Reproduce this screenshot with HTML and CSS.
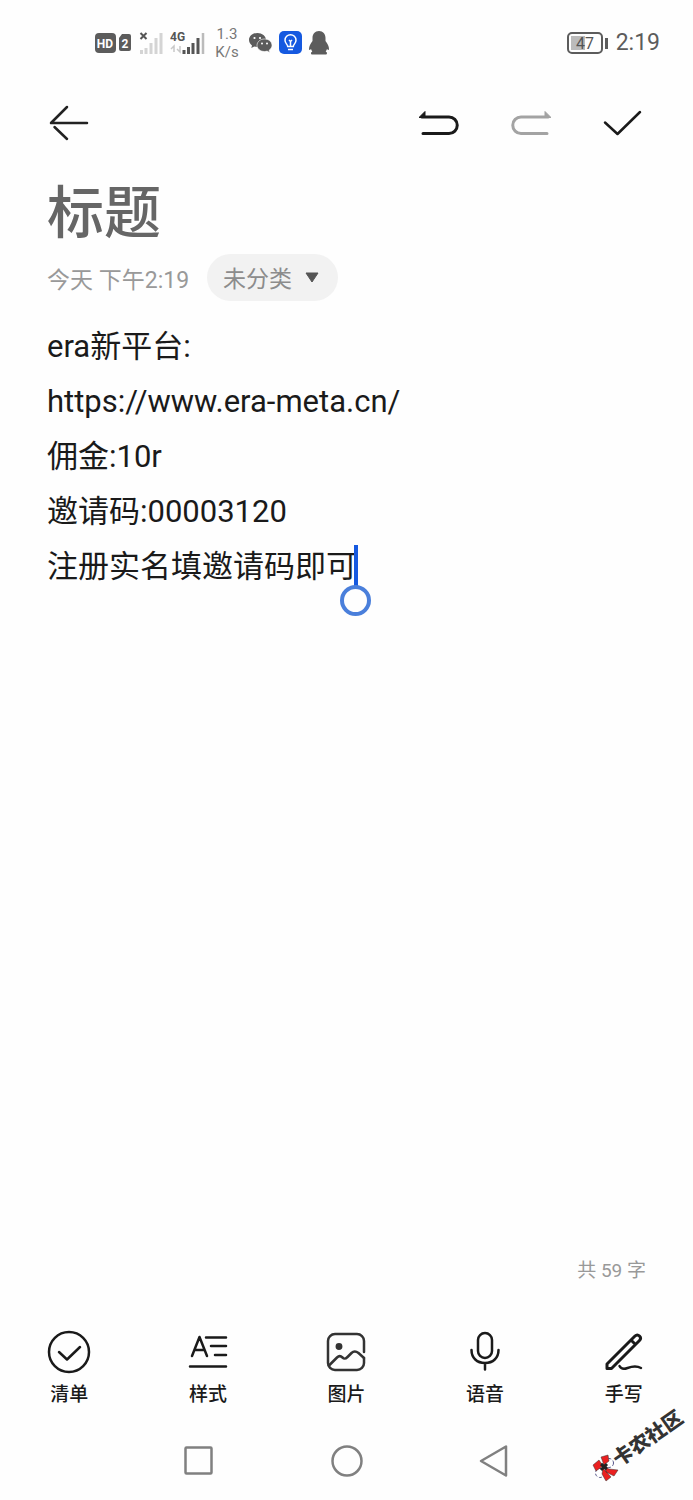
FILE: index.html
```
<!DOCTYPE html>
<html lang="zh-CN">

<head>
    <meta charset="UTF-8">
    <meta name="viewport" content="width=device-width, initial-scale=1.0">
    <title>备忘录</title>
    <link rel="stylesheet" href="styles.css">
</head>

<body>
    <div class="status-bar">
        <div class="status-left">
            <svg class="sim" width="37" height="20" viewBox="0 0 37 20">
                <rect x="0" y="0" width="21" height="20" rx="4" fill="#5c5c5c" />
                <text x="10" y="15" class="hd-text">HD</text>
                <path d="M27 1h7a2 2 0 0 1 2 2v13a2 2 0 0 1-2 2h-8a2 2 0 0 1-2-2V5z" fill="#5c5c5c" />
                <text x="30" y="15" class="hd-text">2</text>
            </svg>
            <svg class="signal" width="24" height="24" viewBox="0 0 24 24">
                <path d="M1.500 2l6 6M7.500 2l-6 6" stroke="#555" stroke-width="2" />
                <path d="M2.500 19v4M7 17v6M12 12v11M17 7v16M22 2v21" stroke="#d4d4d4" stroke-width="3" />
            </svg>
            <svg class="signal-4g" width="35" height="24" viewBox="0 0 35 24">
                <text x="0" y="10" class="net-text">4G</text>
                <path d="M1 18l3-3v6M10 15v6l-3-3" stroke="#c8c8c8" stroke-width="1.500" fill="none" />
                <path d="M14 19v4M18.500 16v7M23 12v11M28 7v16" stroke="#555" stroke-width="3" />
                <path d="M33 2v21" stroke="#bbb" stroke-width="2.500" />
            </svg>
            <span class="speed">1.3<br>K/s</span>
            <svg class="wechat" width="23" height="20" viewBox="0 0 23 20">
                <path d="M8.500 0C3.800 0 0 3.100 0 7c0 2.200 1.200 4.100 3 5.400L2.300 15l3-1.600c1 .3 2 .5 3.200.5C13 14 17 10.900 17 7S13 0 8.500 0z" fill="#5c5c5c" />
                <path d="M15.500 6C11.300 6 8 8.800 8 12.300s3.300 6.200 7.500 6.200c.9 0 1.800-.1 2.600-.4l2.700 1.500-.7-2.400c1.700-1.200 2.900-2.900 2.900-4.900C23 8.800 19.700 6 15.500 6z" fill="#5c5c5c" stroke="#fff" stroke-width=".6" />
                <g fill="#fff">
                    <circle cx="5.500" cy="5" r="1.100" />
                    <circle cx="11" cy="5" r="1.100" />
                    <circle cx="13" cy="10.500" r="1" />
                    <circle cx="18" cy="10.500" r="1" />
                </g>
            </svg>
            <svg class="bulb" width="23" height="23" viewBox="0 0 23 23">
                <rect width="23" height="23" rx="5" fill="#1559e0" />
                <path d="M8.700 15.500c0-2-2.700-3-2.700-6.300a5.500 5.500 0 0 1 11 0c0 3.300-2.700 4.300-2.700 6.300zM9 18.500h5M11.500 15v-5M10 9l1.500 1.500L13 9" fill="none" stroke="#fff" stroke-width="1.500" />
            </svg>
            <svg class="qq" width="20" height="24" viewBox="0 0 20 24">
                <path d="M10 0C6 0 3.500 3 3.500 7v3C1.500 12.500 0 15.500 0 18c0 1.500.9 1.200 2 0 .3 1 .7 1.800 1.300 2.500-1.800.9-1.800 3 .2 3h13c2 0 2-2.100.2-3 .6-.7 1-1.500 1.300-2.500 1.100 1.200 2 1.500 2 0 0-2.500-1.500-5.500-3.500-8V7c0-4-2.500-7-6.500-7z" fill="#5c5c5c" />
            </svg>
        </div>
        <div class="status-right">
            <svg width="42" height="22" viewBox="0 0 42 22">
                <rect x="4" y="4" width="14" height="14" fill="#bbb" />
                <rect x="1" y="1" width="34" height="20" rx="4" fill="none" stroke="#5c5c5c" stroke-width="2" />
                <path d="M39.500 6v11" stroke="#5c5c5c" stroke-width="3" />
                <text x="18" y="17" class="battery-text">47</text>
            </svg>
            <span class="clock">2:19</span>
        </div>
    </div>

    <header class="top-bar">
        <button class="icon-btn back" aria-label="返回">
            <svg width="40" height="36" viewBox="0 0 40 36" fill="none" stroke="#222" stroke-width="2.500" stroke-linecap="round">
                <path d="M18 2L2 18H38M5.500 22L18 34" stroke-linejoin="round" />
            </svg>
        </button>
        <button class="icon-btn" aria-label="撤销">
            <svg width="40" height="26" viewBox="0 0 40 26">
                <path d="M3 7H30a8.200 8.200 0 0 1 0 16.500H4" fill="none" stroke="#1a1a1a" stroke-width="3" stroke-linecap="round" />
                <path d="M0 7.500L6 1.500V7.500z" fill="#1a1a1a" stroke="#1a1a1a" stroke-linejoin="round" />
            </svg>
        </button>
        <button class="icon-btn" aria-label="重做" disabled>
            <svg width="40" height="26" viewBox="0 0 40 26">
                <path d="M37 7H10a8.200 8.200 0 0 0 0 16.500H36" fill="none" stroke="#a3a3a3" stroke-width="3" stroke-linecap="round" />
                <path d="M40 7.500L34 1.500V7.500z" fill="#a3a3a3" stroke="#a3a3a3" stroke-linejoin="round" />
            </svg>
        </button>
        <button class="icon-btn" aria-label="完成">
            <svg width="40" height="26" viewBox="0 0 40 26">
                <path d="M2 12.500L14.500 24L37 2" fill="none" stroke="#1a1a1a" stroke-width="2.500" stroke-linecap="round" stroke-linejoin="round" />
            </svg>
        </button>
    </header>

    <main class="note">
        <input class="title" type="text" placeholder="标题" aria-label="标题">
        <div class="meta">
            <span class="time">今天 下午2:19</span>
            <div class="category">
                <select aria-label="分类">
                    <option>未分类</option>
                </select>
                <svg class="arrow" width="14" height="11" viewBox="0 0 14 11">
                    <path d="M1 1h12L7 10z" fill="#555" stroke="#555" stroke-linejoin="round" />
                </svg>
            </div>
        </div>
        <div class="editor">
            <textarea class="content" rows="5" aria-label="正文" spellcheck="false">era新平台:
https://www.era-meta.cn/
佣金:10r
邀请码:00003120
注册实名填邀请码即可</textarea>
            <div class="caret"></div>
        </div>
        <p class="count">共 59 字</p>
    </main>

    <footer class="tools">
        <button class="tool">
            <svg width="44" height="44" viewBox="0 0 44 44" fill="none" stroke="#1a1a1a" stroke-width="2.500" stroke-linecap="round" stroke-linejoin="round">
                <circle cx="22" cy="22" r="20" />
                <path d="M12 22l8 7.500L33 17" />
            </svg>
            清单
        </button>
        <button class="tool">
            <svg width="44" height="44" viewBox="0 0 44 44" fill="none" stroke="#1a1a1a" stroke-width="2.500" stroke-linecap="round" stroke-linejoin="round">
                <path d="M6 26L13.500 7L21 26M8.500 20H18.500M20 7.500H40M25 16H40M29 25H40M4 36.500H40" />
            </svg>
            样式
        </button>
        <button class="tool">
            <svg width="44" height="44" viewBox="0 0 44 44" fill="none" stroke="#333" stroke-width="2.500" stroke-linecap="round" stroke-linejoin="round">
                <path d="M40 22V11a7 7 0 0 0-7-7H11a7 7 0 0 0-7 7V33a7 7 0 0 0 7 7H33a7 7 0 0 0 7-7V28" />
                <path d="M5 35.500l8-8c2-2 3.500-2 5.500 0s3 1.500 5-.5l4-4c2.500-2.500 4.500-2 7 0l5.500 5" />
                <circle cx="15" cy="16.500" r="2.200" fill="#333" />
            </svg>
            图片
        </button>
        <button class="tool">
            <svg width="44" height="44" viewBox="0 0 44 44" fill="none" stroke="#1a1a1a" stroke-width="2.500" stroke-linecap="round">
                <rect x="15" y="3" width="14" height="25" rx="7" />
                <path d="M8.500 20c0 8 5.500 13 13.500 13s13.500-5 13.500-13M22 33v6.500" />
            </svg>
            语音
        </button>
        <button class="tool">
            <svg width="44" height="44" viewBox="0 0 44 44" fill="none" stroke="#1a1a1a" stroke-width="3" stroke-linecap="round" stroke-linejoin="round">
                <path d="M5 38.500V34L33 6c1.500-1.500 3-1.500 4.500 0s1.500 3 0 4.500L9.500 38.500zM29 10l4.500 4.500" />
                <path d="M17.500 36c1.500 3 4 3.500 8 2s9-2.500 13.500 0" stroke-width="2.500" />
            </svg>
            手写
        </button>
    </footer>

    <nav class="nav-bar">
        <button class="icon-btn" aria-label="最近任务">
            <svg width="34" height="34" viewBox="0 0 34 34">
                <rect x="3.500" y="3.500" width="26" height="26" rx="1" fill="none" stroke="#808080" stroke-width="2.500" />
            </svg>
        </button>
        <button class="icon-btn" aria-label="主屏幕">
            <svg width="34" height="34" viewBox="0 0 34 34">
                <circle cx="17" cy="17" r="14.500" fill="none" stroke="#808080" stroke-width="2.500" />
            </svg>
        </button>
        <button class="icon-btn" aria-label="返回上一级">
            <svg width="34" height="34" viewBox="0 0 34 34">
                <path d="M4 17L29 2.500V31.500z" fill="none" stroke="#808080" stroke-width="2.500" stroke-linejoin="round" />
            </svg>
        </button>
    </nav>

    <svg class="watermark" width="110" height="90" viewBox="0 0 110 90">
        <g stroke="#333" stroke-width=".5">
            <circle cx="26" cy="63" r="4.500" fill="#fff" stroke="#558" stroke-width="1" stroke-dasharray="3 2" />
            <circle cx="17" cy="73" r="4.500" fill="#fff" stroke="#558" stroke-width="1" stroke-dasharray="3 2" />
            <path d="M10 65L16 60L20 66L13 71zM18 57L25 55L26 61L21 65zM22 67L26 69L35 70L31 76L23 72zM20 68L28 77L23 81L19 74z" fill="#ea2020" />
            <path d="M18 64l6 5M24 64l-6 6" stroke="#222" stroke-width="3" />
        </g>
        <text class="watermark-text" transform="translate(36 67) rotate(-35)">卡农社区</text>
    </svg>
</body>

</html>
```
FILE: styles.css
```
* {
    box-sizing: border-box;
}

body {
    margin: 0;
    min-height: 100vh;
    display: flex;
    flex-direction: column;
    position: relative;
    background: #fefefe;
    color: #1a1a1a;
    font-family: Roboto, "Noto Sans CJK SC", sans-serif;
}

svg {
    display: block;
    flex: none;
}

button {
    border: 0;
    padding: 0;
    background: none;
    color: inherit;
    font-family: inherit;
}

/* status bar */
.status-bar {
    display: flex;
    justify-content: space-between;
    align-items: center;
    height: 85px;
    padding: 0 33px 0 95px;
    color: #5c5c5c;
}

.status-left {
    display: flex;
    align-items: center;
    gap: 7px;
}

.status-right {
    display: flex;
    align-items: center;
    gap: 7px;
}

.hd-text {
    fill: #fff;
    font-size: 12px;
    font-weight: 700;
    text-anchor: middle;
}

.net-text {
    fill: #555;
    font-size: 12px;
    font-weight: 700;
}

.battery-text {
    fill: #555;
    font-size: 16px;
    text-anchor: middle;
}

.speed {
    width: 30px;
    font-size: 15px;
    line-height: 18px;
    text-align: center;
    color: #777;
}

.clock {
    font-size: 23px;
    line-height: 28px;
}

/* top bar */
.top-bar {
    display: flex;
    align-items: center;
    gap: 52px;
    height: 76px;
    padding: 0 50px 0 49px;
}

.icon-btn {
    display: flex;
    justify-content: center;
    align-items: center;
}

.back {
    margin-right: auto;
}

/* note */
.note {
    flex: 1;
    display: flex;
    flex-direction: column;
    padding: 12px 47px 0;
}

.title {
    width: 100%;
    height: 80px;
    padding: 0;
    border: 0;
    outline: 0;
    background: none;
    color: #1a1a1a;
    font-family: inherit;
    font-size: 57px;
    font-weight: 500;
}

.title::placeholder {
    color: #666;
    opacity: 1;
}

.meta {
    display: flex;
    align-items: center;
    gap: 18px;
    margin-top: 1px;
    color: #999;
    font-size: 23px;
}

.category {
    display: flex;
    align-items: center;
    position: relative;
}

.category select {
    height: 47px;
    padding: 4px 46px 0 16px;
    border: 0;
    border-radius: 24px;
    appearance: none;
    background: #f2f2f2;
    color: #8c8c8c;
    font-family: inherit;
    font-size: 23px;
}

.arrow {
    position: absolute;
    right: 19px;
    pointer-events: none;
}

.editor {
    position: relative;
    margin-top: 18px;
    font-size: 31px;
    line-height: 55px;
}

.content {
    display: block;
    width: 100%;
    padding: 0;
    border: 0;
    outline: 0;
    resize: none;
    overflow: hidden;
    background: none;
    color: #1a1a1a;
    font: inherit;
}

/* text cursor sits after the tenth character of the last line */
.caret {
    position: absolute;
    left: 10em;
    bottom: 8px;
    width: 4px;
    height: 41px;
    margin-left: -3px;
    background: #1559e0;
}

.caret::after {
    content: "";
    position: absolute;
    top: 40px;
    left: -14px;
    box-sizing: border-box;
    width: 31px;
    height: 31px;
    border: 4px solid #4a7fdb;
    border-radius: 50%;
    background: #fefefe;
}

.count {
    margin: auto 0 0;
    color: #999;
    font-size: 19px;
    line-height: 28px;
    text-align: right;
}

/* bottom tools */
.tools {
    display: grid;
    grid-template-columns: repeat(5, 1fr);
    margin-top: 45px;
}

.tool {
    display: flex;
    flex-direction: column;
    align-items: center;
    gap: 7px;
    font-size: 19px;
    font-weight: 500;
    line-height: 28px;
}

.nav-bar {
    display: grid;
    grid-template-columns: repeat(3, 1fr);
    height: 91px;
    padding: 13px 18% 0;
    align-items: start;
}

.nav-bar .icon-btn {
    padding-top: 22px;
}

.watermark {
    position: absolute;
    right: 0;
    bottom: 10px;
}

.watermark-text {
    fill: #333;
    font-size: 20px;
    font-weight: 900;
}
```
